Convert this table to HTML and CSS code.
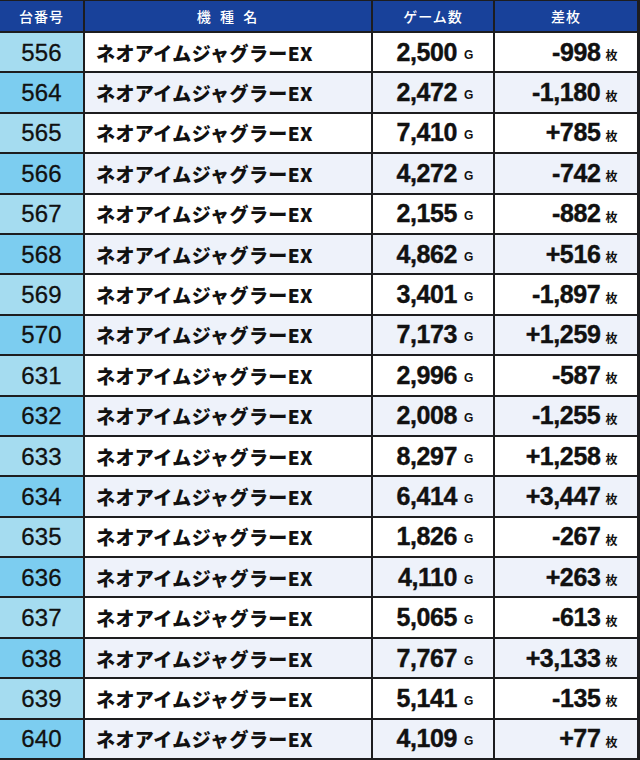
FILE: index.html
```html
<!DOCTYPE html>
<html lang="ja">
<head>
<meta charset="utf-8">
<link rel="stylesheet" href="styles.css">
</head>
<body>
<div class="table">
  <div class="th">台番号</div>
  <div class="th spaced">機 種 名</div>
  <div class="th">ゲーム数</div>
  <div class="th">差枚</div>

  <div class="no">556</div><div class="name">ネオアイムジャグラーEX</div><div class="num">2,500<span class="u">G</span></div><div class="num">-998<span class="m">枚</span></div>
  <div class="no alt">564</div><div class="name alt">ネオアイムジャグラーEX</div><div class="num alt">2,472<span class="u">G</span></div><div class="num alt">-1,180<span class="m">枚</span></div>
  <div class="no">565</div><div class="name">ネオアイムジャグラーEX</div><div class="num">7,410<span class="u">G</span></div><div class="num">+785<span class="m">枚</span></div>
  <div class="no alt">566</div><div class="name alt">ネオアイムジャグラーEX</div><div class="num alt">4,272<span class="u">G</span></div><div class="num alt">-742<span class="m">枚</span></div>
  <div class="no">567</div><div class="name">ネオアイムジャグラーEX</div><div class="num">2,155<span class="u">G</span></div><div class="num">-882<span class="m">枚</span></div>
  <div class="no alt">568</div><div class="name alt">ネオアイムジャグラーEX</div><div class="num alt">4,862<span class="u">G</span></div><div class="num alt">+516<span class="m">枚</span></div>
  <div class="no">569</div><div class="name">ネオアイムジャグラーEX</div><div class="num">3,401<span class="u">G</span></div><div class="num">-1,897<span class="m">枚</span></div>
  <div class="no alt">570</div><div class="name alt">ネオアイムジャグラーEX</div><div class="num alt">7,173<span class="u">G</span></div><div class="num alt">+1,259<span class="m">枚</span></div>
  <div class="no">631</div><div class="name">ネオアイムジャグラーEX</div><div class="num">2,996<span class="u">G</span></div><div class="num">-587<span class="m">枚</span></div>
  <div class="no alt">632</div><div class="name alt">ネオアイムジャグラーEX</div><div class="num alt">2,008<span class="u">G</span></div><div class="num alt">-1,255<span class="m">枚</span></div>
  <div class="no">633</div><div class="name">ネオアイムジャグラーEX</div><div class="num">8,297<span class="u">G</span></div><div class="num">+1,258<span class="m">枚</span></div>
  <div class="no alt">634</div><div class="name alt">ネオアイムジャグラーEX</div><div class="num alt">6,414<span class="u">G</span></div><div class="num alt">+3,447<span class="m">枚</span></div>
  <div class="no">635</div><div class="name">ネオアイムジャグラーEX</div><div class="num">1,826<span class="u">G</span></div><div class="num">-267<span class="m">枚</span></div>
  <div class="no alt">636</div><div class="name alt">ネオアイムジャグラーEX</div><div class="num alt">4,110<span class="u">G</span></div><div class="num alt">+263<span class="m">枚</span></div>
  <div class="no">637</div><div class="name">ネオアイムジャグラーEX</div><div class="num">5,065<span class="u">G</span></div><div class="num">-613<span class="m">枚</span></div>
  <div class="no alt">638</div><div class="name alt">ネオアイムジャグラーEX</div><div class="num alt">7,767<span class="u">G</span></div><div class="num alt">+3,133<span class="m">枚</span></div>
  <div class="no">639</div><div class="name">ネオアイムジャグラーEX</div><div class="num">5,141<span class="u">G</span></div><div class="num">-135<span class="m">枚</span></div>
  <div class="no alt">640</div><div class="name alt">ネオアイムジャグラーEX</div><div class="num alt">4,109<span class="u">G</span></div><div class="num alt">+77<span class="m">枚</span></div>
</div>
</body>
</html>
```

FILE: styles.css
```css
html, body {
  margin: 0;
  padding: 0;
  background: #ffffff;
}

.table {
  box-sizing: border-box;
  width: 640px;
  height: 760px;
  display: grid;
  grid-template-columns: 83px 286px 120px 142px;
  grid-template-rows: 30px repeat(18, 1fr);
  gap: 2px;
  padding: 1px 3px 2px 0;
  background: #1d1d1f;
  font-family: "Liberation Sans", Arial, "Noto Sans CJK JP", sans-serif;
  color: #111111;
}

.th {
  background: #18419a;
  color: #ffffff;
  display: flex;
  align-items: center;
  justify-content: center;
  font-family: "Noto Sans CJK JP", sans-serif;
  font-size: 14px;
  font-weight: 500;
  letter-spacing: 1px;
}

.th.spaced {
  letter-spacing: 2px;
  word-spacing: 2px;
}

.no {
  background: #a5dcf0;
  display: flex;
  align-items: center;
  justify-content: center;
  font-size: 24px;
  letter-spacing: 0.2px;
  padding-top: 1px;
  -webkit-text-stroke: 0.3px #111111;
}

.no.alt {
  background: #7ccdf0;
}

.name {
  background: #ffffff;
  display: flex;
  align-items: center;
  padding-left: 11px;
  font-family: "Noto Sans CJK JP", sans-serif;
  font-size: 19px;
  font-weight: 900;
  letter-spacing: 0.4px;
}

.num {
  background: #ffffff;
  display: flex;
  align-items: center;
  justify-content: flex-end;
  padding-right: 20px;
  font-size: 25px;
  font-weight: 700;
  letter-spacing: -0.4px;
  -webkit-text-stroke: 0.4px #111111;
}

.alt.name, .alt.num {
  background: #eef2fa;
}

.u {
  font-size: 12px;
  font-weight: 700;
  margin-left: 7px;
  margin-top: 5px;
  -webkit-text-stroke: 0;
}

.m {
  font-family: "Noto Sans CJK JP", sans-serif;
  font-size: 12px;
  font-weight: 700;
  margin-left: 5px;
  margin-top: 5px;
  -webkit-text-stroke: 0;
}
```
